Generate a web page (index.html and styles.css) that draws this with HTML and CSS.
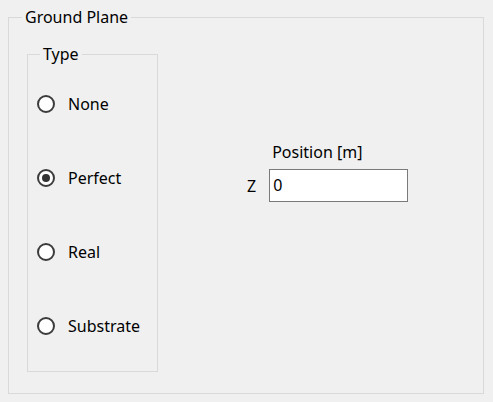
FILE: index.html
```html
<!DOCTYPE html>
<html>
<head>
<meta charset="utf-8">
<link rel="stylesheet" href="styles.css">
</head>
<body>
<div class="page">
  <fieldset class="group outer">
    <legend class="legend">Ground Plane</legend>
    <div class="content">
      <fieldset class="group type">
        <legend class="legend">Type</legend>
        <div class="radios">
          <label class="radio"><span class="circle"></span><span>None</span></label>
          <label class="radio"><span class="circle checked"></span><span>Perfect</span></label>
          <label class="radio"><span class="circle"></span><span>Real</span></label>
          <label class="radio"><span class="circle"></span><span>Substrate</span></label>
        </div>
      </fieldset>
      <div class="position">
        <span class="pos-label">Position [m]</span>
        <span class="z-label">Z</span>
        <div class="input">0</div>
      </div>
    </div>
  </fieldset>
</div>
</body>
</html>
```

FILE: styles.css
```css
html, body {
  margin: 0;
  padding: 0;
  background: #f0f0f0;
}
body {
  font-family: "Noto Sans", "Open Sans", sans-serif;
  font-size: 16px;
  color: #000;
  width: 493px;
  height: 402px;
  overflow: hidden;
}
.page {
  padding: 7px 9px 0 8px;
}
.group {
  margin: 0;
  padding: 0;
  border: 1px solid #d9d9d9;
  min-width: 0;
}
.legend {
  margin-left: 13px;
  padding: 0 3px;
  line-height: 20px;
  height: 20px;
}
.outer {
  height: 387px;
  box-sizing: border-box;
}
.content {
  display: flex;
  align-items: flex-start;
}
.type {
  margin-left: 18px;
  margin-top: 17px;
  width: 131px;
  height: 328px;
  box-sizing: border-box;
}
.type .legend {
  margin-left: 12px;
}
.radios {
  display: flex;
  flex-direction: column;
  gap: 54px;
  padding: 30px 0 0 9px;
}
.radio {
  display: flex;
  align-items: center;
  height: 20px;
  gap: 13px;
}
.circle {
  width: 18px;
  height: 18px;
  box-sizing: border-box;
  border: 2px solid #3c3c3c;
  border-radius: 50%;
  background: #fff;
  display: flex;
  align-items: center;
  justify-content: center;
}
.circle.checked::after {
  content: "";
  width: 8px;
  height: 8px;
  border-radius: 50%;
  background: #333;
}
.position {
  display: grid;
  grid-template-columns: auto 139px;
  grid-template-rows: 20px 33px;
  column-gap: 13px;
  row-gap: 7px;
  margin-left: 89px;
  margin-top: 115px;
  align-items: center;
}
.pos-label {
  grid-column: 2;
  grid-row: 1;
  padding-left: 3px;
  line-height: 20px;
}
.z-label {
  grid-column: 1;
  grid-row: 2;
}
.input {
  grid-column: 2;
  grid-row: 2;
  height: 33px;
  box-sizing: border-box;
  border: 1px solid #7a7a7a;
  background: #fff;
  padding: 0 3px;
  line-height: 31px;
}
```
